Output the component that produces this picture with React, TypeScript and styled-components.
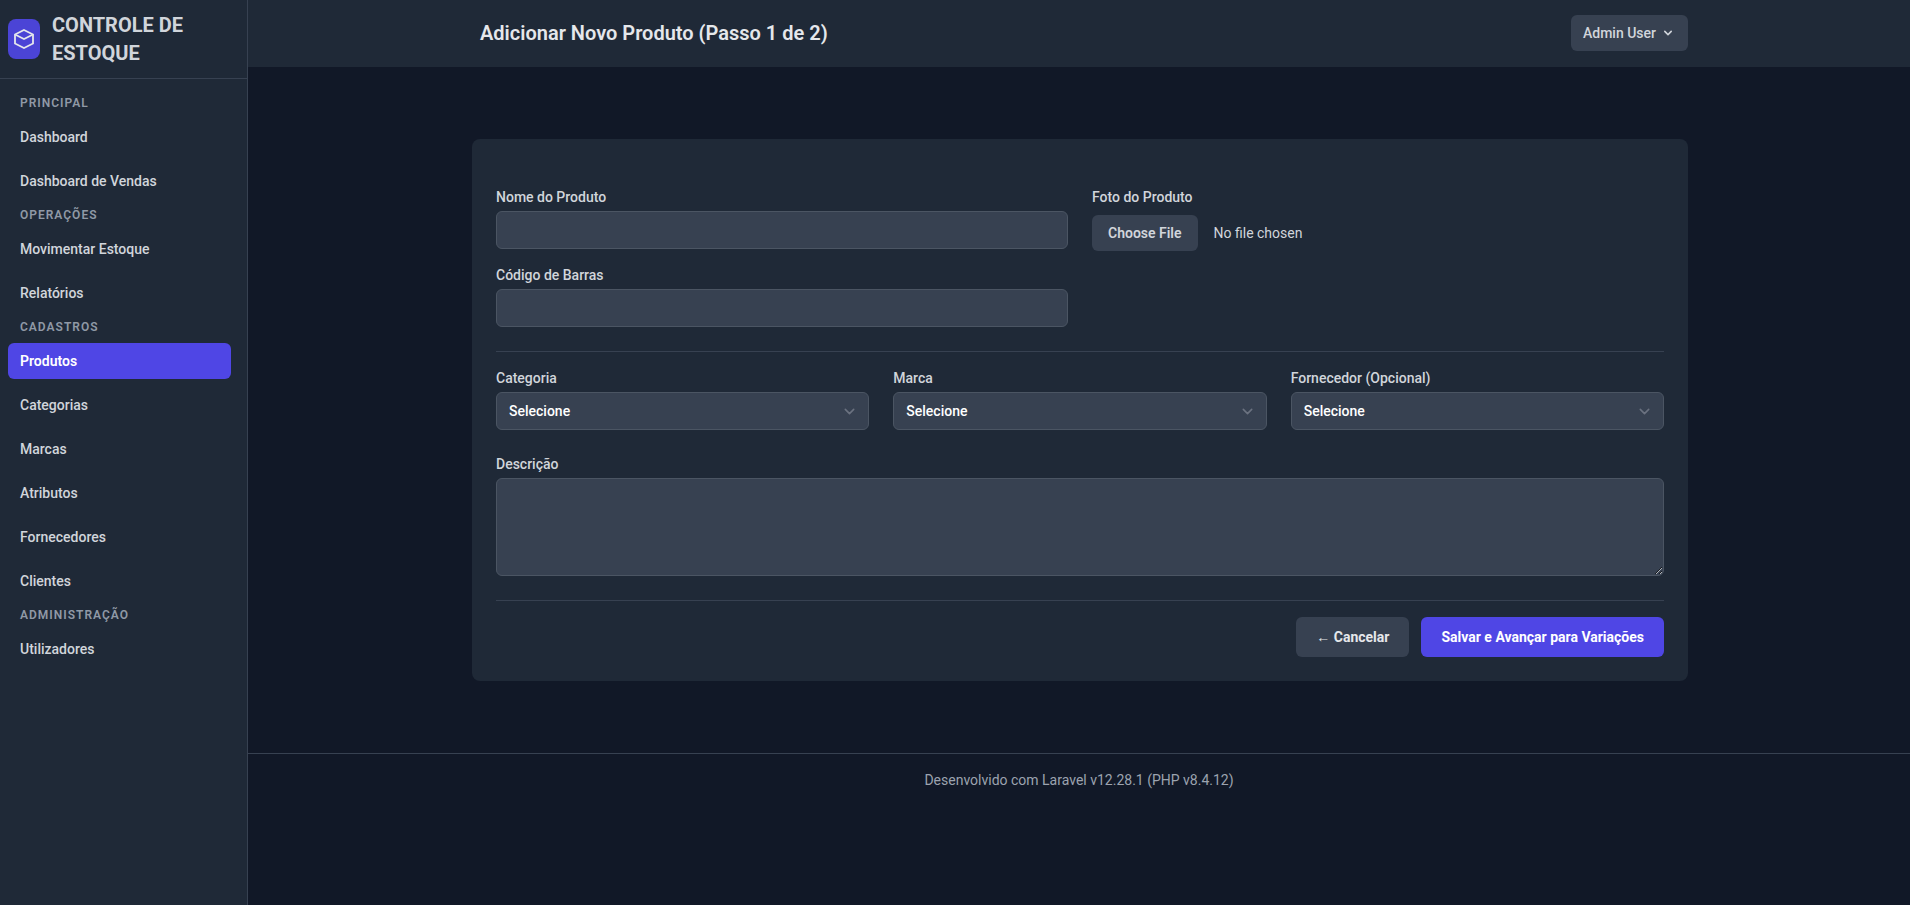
import React from 'react';
import styled, { createGlobalStyle } from 'styled-components';

const GlobalStyle = createGlobalStyle`
  *, *::before, *::after { box-sizing: border-box; }
  body {
    margin: 0;
    background: #111827;
    color: #d1d5db;
    font-family: Roboto, "Liberation Sans", sans-serif;
    font-size: 14px;
    line-height: 20px;
  }
  button, input, select, textarea { font: inherit; }
`;

const Page = styled.div`
  display: flex;
  min-height: 100vh;
`;

const Sidebar = styled.aside`
  flex: 0 0 248px;
  background: #1f2937;
  border-right: 1px solid #374151;
`;

const Brand = styled.a`
  display: flex;
  align-items: center;
  gap: 12px;
  padding: 11px 8px;
  border-bottom: 1px solid #374151;
  color: #d1d5db;
  text-decoration: none;
`;

const BrandMark = styled.span`
  display: flex;
  align-items: center;
  justify-content: center;
  flex: 0 0 32px;
  height: 40px;
  border-radius: 8px;
  background: #4b44d6;
  color: #e5e7eb;
`;

const BrandName = styled.span`
  width: 160px;
  font-size: 20px;
  font-weight: 700;
  line-height: 28px;
`;

const Nav = styled.nav`
  padding: 16px 16px 16px 8px;
`;

const NavTitle = styled.h2`
  margin: 0;
  padding: 0 12px;
  color: #9099a6;
  font-size: 12px;
  font-weight: 600;
  line-height: 16px;
  letter-spacing: 1px;
  text-transform: uppercase;
`;

const NavList = styled.ul`
  display: flex;
  flex-direction: column;
  gap: 8px;
  margin: 8px 0;
  padding: 0;
  list-style: none;
`;

const NavLink = styled.a<{ $active?: boolean }>`
  display: block;
  padding: 8px 12px;
  border-radius: 6px;
  background: ${(p) => (p.$active ? '#4f46e5' : 'transparent')};
  color: ${(p) => (p.$active ? '#ffffff' : '#d1d5db')};
  font-weight: ${(p) => (p.$active ? 600 : 500)};
  text-decoration: none;
`;

const Content = styled.div`
  flex: 1;
  min-width: 0;
`;

const Container = styled.div`
  max-width: 1280px;
  margin: 0 auto;
  padding: 0 31px 0 33px;
`;

const Header = styled.header`
  padding: 15px 0 16px;
  background: #1f2937;
`;

const HeaderRow = styled(Container)`
  display: flex;
  align-items: center;
  justify-content: space-between;
`;

const PageTitle = styled.h1`
  margin: 0;
  padding-left: 8px;
  color: #e5e7eb;
  font-size: 20px;
  font-weight: 600;
  line-height: 28px;
`;

const UserButton = styled.button`
  display: flex;
  align-items: center;
  gap: 4px;
  padding: 8px 12px;
  border: 0;
  border-radius: 6px;
  background: #374151;
  color: #d1d5db;
  font-weight: 500;
  cursor: pointer;
`;

const Main = styled.main`
  padding: 72px 0;
`;

const Card = styled.form`
  padding: 48px 24px 24px;
  border-radius: 8px;
  background: #1f2937;
`;

const Grid = styled.div<{ $columns: number }>`
  display: grid;
  grid-template-columns: repeat(${(p) => p.$columns}, minmax(0, 1fr));
  column-gap: 24px;
`;

const Stack = styled.div`
  display: flex;
  flex-direction: column;
  gap: 16px;
`;

const Section = styled.section`
  margin-top: 24px;
`;

const RuledSection = styled(Section)`
  padding-top: 16px;
  border-top: 1px solid #374151;
`;

const Field = styled.div`
  display: flex;
  flex-direction: column;
  gap: 4px;
`;

const Label = styled.label`
  color: #d1d5db;
  font-weight: 500;
`;

const TextInput = styled.input`
  width: 100%;
  height: 38px;
  padding: 8px 12px;
  border: 1px solid #4b5563;
  border-radius: 6px;
  background: #374151;
  color: #ffffff;
`;

const TextArea = styled.textarea`
  display: block;
  width: 100%;
  height: 98px;
  padding: 8px 12px;
  border: 1px solid #4b5563;
  border-radius: 6px;
  background: #374151;
  color: #ffffff;
  resize: vertical;
`;

const FileInput = styled.input`
  width: 100%;
  margin-top: 4px;
  color: #d1d5db;

  &::file-selector-button {
    margin: 0 16px 0 0;
    padding: 8px 16px;
    border: 0;
    border-radius: 6px;
    background: #374151;
    color: #d1d5db;
    font: inherit;
    font-weight: 600;
  }
`;

const SelectBox = styled.div`
  position: relative;
`;

const SelectInput = styled.select`
  width: 100%;
  height: 38px;
  padding: 8px 40px 8px 12px;
  border: 1px solid #4b5563;
  border-radius: 6px;
  background: #374151;
  color: #ffffff;
  font-weight: 500;
  line-height: 20px;
  appearance: none;
`;

const SelectArrow = styled.svg`
  position: absolute;
  top: 9px;
  right: 9px;
  pointer-events: none;
`;

const Actions = styled.div`
  display: flex;
  justify-content: flex-end;
  gap: 12px;
`;

const actionColors = {
  primary: ['#4f46e5', '#ffffff'],
  secondary: ['#374151', '#e5e7eb'],
};

const ActionButton = styled.button<{ $kind: keyof typeof actionColors }>`
  padding: 10px 20px;
  border: 0;
  border-radius: 6px;
  background: ${(p) => actionColors[p.$kind][0]};
  color: ${(p) => actionColors[p.$kind][1]};
  font-weight: 700;
  cursor: pointer;
`;

const Footer = styled.footer`
  padding: 16px 0;
  border-top: 1px solid #374151;
  color: #9ca3af;
  text-align: center;
`;

const menu = [
  { title: 'Principal', items: ['Dashboard', 'Dashboard de Vendas'] },
  { title: 'Operações', items: ['Movimentar Estoque', 'Relatórios'] },
  {
    title: 'Cadastros',
    items: ['Produtos', 'Categorias', 'Marcas', 'Atributos', 'Fornecedores', 'Clientes'],
  },
  { title: 'Administração', items: ['Utilizadores'] },
];

const lookups = [
  { id: 'categoria', label: 'Categoria' },
  { id: 'marca', label: 'Marca' },
  { id: 'fornecedor', label: 'Fornecedor (Opcional)' },
];

function BoxIcon() {
  return (
    <svg width="24" height="24" viewBox="0 0 24 24" fill="none" stroke="currentColor" strokeWidth="1.8" aria-hidden="true">
      <path d="M12 3 21 7.5V16.5L12 21 3 16.5V7.5Z" />
      <path d="M3 7.5 12 12 21 7.5" />
    </svg>
  );
}

function SelectField({ id, label }: { id: string; label: string }) {
  return (
    <Field>
      <Label htmlFor={id}>{label}</Label>
      <SelectBox>
        <SelectInput id={id} name={id}>
          <option>Selecione</option>
        </SelectInput>
        <SelectArrow width="21" height="21" viewBox="0 0 20 20" fill="none" stroke="#6b7280" strokeWidth="1.5" strokeLinecap="round" strokeLinejoin="round" aria-hidden="true">
          <path d="M6 8l4 4 4-4" />
        </SelectArrow>
      </SelectBox>
    </Field>
  );
}

export default function App() {
  return (
    <Page>
      <GlobalStyle />
      <Sidebar>
        <Brand href="#">
          <BrandMark>
            <BoxIcon />
          </BrandMark>
          <BrandName>CONTROLE DE ESTOQUE</BrandName>
        </Brand>
        <Nav>
          {menu.map((group) => (
            <React.Fragment key={group.title}>
              <NavTitle>{group.title}</NavTitle>
              <NavList>
                {group.items.map((item) => (
                  <li key={item}>
                    <NavLink href="#" $active={item === 'Produtos'}>
                      {item}
                    </NavLink>
                  </li>
                ))}
              </NavList>
            </React.Fragment>
          ))}
        </Nav>
      </Sidebar>

      <Content>
        <Header>
          <HeaderRow>
            <PageTitle>Adicionar Novo Produto (Passo 1 de 2)</PageTitle>
            <UserButton type="button">
              Admin User
              <svg width="16" height="16" viewBox="0 0 20 20" fill="currentColor" aria-hidden="true">
                <path fillRule="evenodd" clipRule="evenodd" d="M5.293 7.293a1 1 0 011.414 0L10 10.586l3.293-3.293a1 1 0 111.414 1.414l-4 4a1 1 0 01-1.414 0l-4-4a1 1 0 010-1.414z" />
              </svg>
            </UserButton>
          </HeaderRow>
        </Header>

        <Main>
          <Container>
            <Card>
              <Grid $columns={2}>
                <Stack>
                  <Field>
                    <Label htmlFor="nome">Nome do Produto</Label>
                    <TextInput id="nome" name="nome" type="text" />
                  </Field>
                  <Field>
                    <Label htmlFor="codigo">Código de Barras</Label>
                    <TextInput id="codigo" name="codigo" type="text" />
                  </Field>
                </Stack>
                <Field>
                  <Label htmlFor="foto">Foto do Produto</Label>
                  <FileInput id="foto" name="foto" type="file" />
                </Field>
              </Grid>

              <RuledSection>
                <Grid $columns={3}>
                  {lookups.map((field) => (
                    <SelectField key={field.id} {...field} />
                  ))}
                </Grid>
              </RuledSection>

              <Section>
                <Field>
                  <Label htmlFor="descricao">Descrição</Label>
                  <TextArea id="descricao" name="descricao" />
                </Field>
              </Section>

              <RuledSection>
                <Actions>
                  <ActionButton type="button" $kind="secondary">
                    ← Cancelar
                  </ActionButton>
                  <ActionButton type="submit" $kind="primary">
                    Salvar e Avançar para Variações
                  </ActionButton>
                </Actions>
              </RuledSection>
            </Card>
          </Container>
        </Main>

        <Footer>Desenvolvido com Laravel v12.28.1 (PHP v8.4.12)</Footer>
      </Content>
    </Page>
  );
}
